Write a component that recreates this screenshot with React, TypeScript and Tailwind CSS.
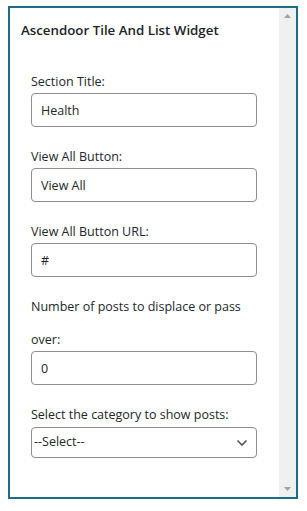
import React from "react";

const fields = [
  { label: "Section Title:", value: "Health" },
  { label: "View All Button:", value: "View All" },
  { label: "View All Button URL:", value: "#" },
  { label: "Number of posts to displace or pass over:", value: "0" },
];

const Scrollbar = () => (
  <div className="flex w-[17px] shrink-0 flex-col items-center justify-between bg-[#f0f0f0] py-[6px]">
    <svg width="7" height="4" viewBox="0 0 7 4">
      <path d="M0 4 L3.5 0 L7 4 Z" fill="#a3a3a3" />
    </svg>
    <svg width="7" height="4" viewBox="0 0 7 4">
      <path d="M0 0 L3.5 4 L7 0 Z" fill="#a3a3a3" />
    </svg>
  </div>
);

export default function App() {
  return (
    <div className="h-[511px] w-[307px] bg-white pl-[8px] pt-[6px] font-['Open_Sans',sans-serif] text-[#1e1e1e]">
      <div className="flex h-[493px] w-[290px] border-2 border-[#1b6e8a] bg-white">
        <div className="flex-1 pl-[11px] pt-[12px]">
          <h2 className="text-[13.3px] font-semibold leading-[20px] text-[#1d2327]">
            Ascendoor Tile And List Widget
          </h2>
          <div className="mt-[24px] flex flex-col gap-[12px] pl-[10px]">
            {fields.map((f) => (
              <div key={f.label} className="flex flex-col">
                <label className="w-[226px] pt-[1px] text-[12.5px] leading-[33px] text-[#22272b]">
                  {f.label}
                </label>
                <input
                  readOnly
                  value={f.value}
                  className="-mt-[5px] h-[34px] w-[226px] rounded-[4px] border border-[#8c8f94] bg-white px-[9px] text-[12.5px] text-[#22272b] outline-none"
                />
              </div>
            ))}
            <div className="flex flex-col">
              <label className="pt-[1px] text-[12.5px] leading-[33px] text-[#22272b]">
                Select the category to show posts:
              </label>
              <div className="-mt-[4px] flex h-[31px] w-[226px] items-center justify-between rounded-[4px] border border-[#8c8f94] bg-white pl-[2px] pr-[8px] text-[12.5px] text-[#22272b]">
                <span>--Select--</span>
                <svg width="12" height="8" viewBox="0 0 12 8">
                  <path d="M1.5 1.5 L6 6 L10.5 1.5" fill="none" stroke="#50575e" strokeWidth="1.6" />
                </svg>
              </div>
            </div>
          </div>
        </div>
        <Scrollbar />
      </div>
    </div>
  );
}
